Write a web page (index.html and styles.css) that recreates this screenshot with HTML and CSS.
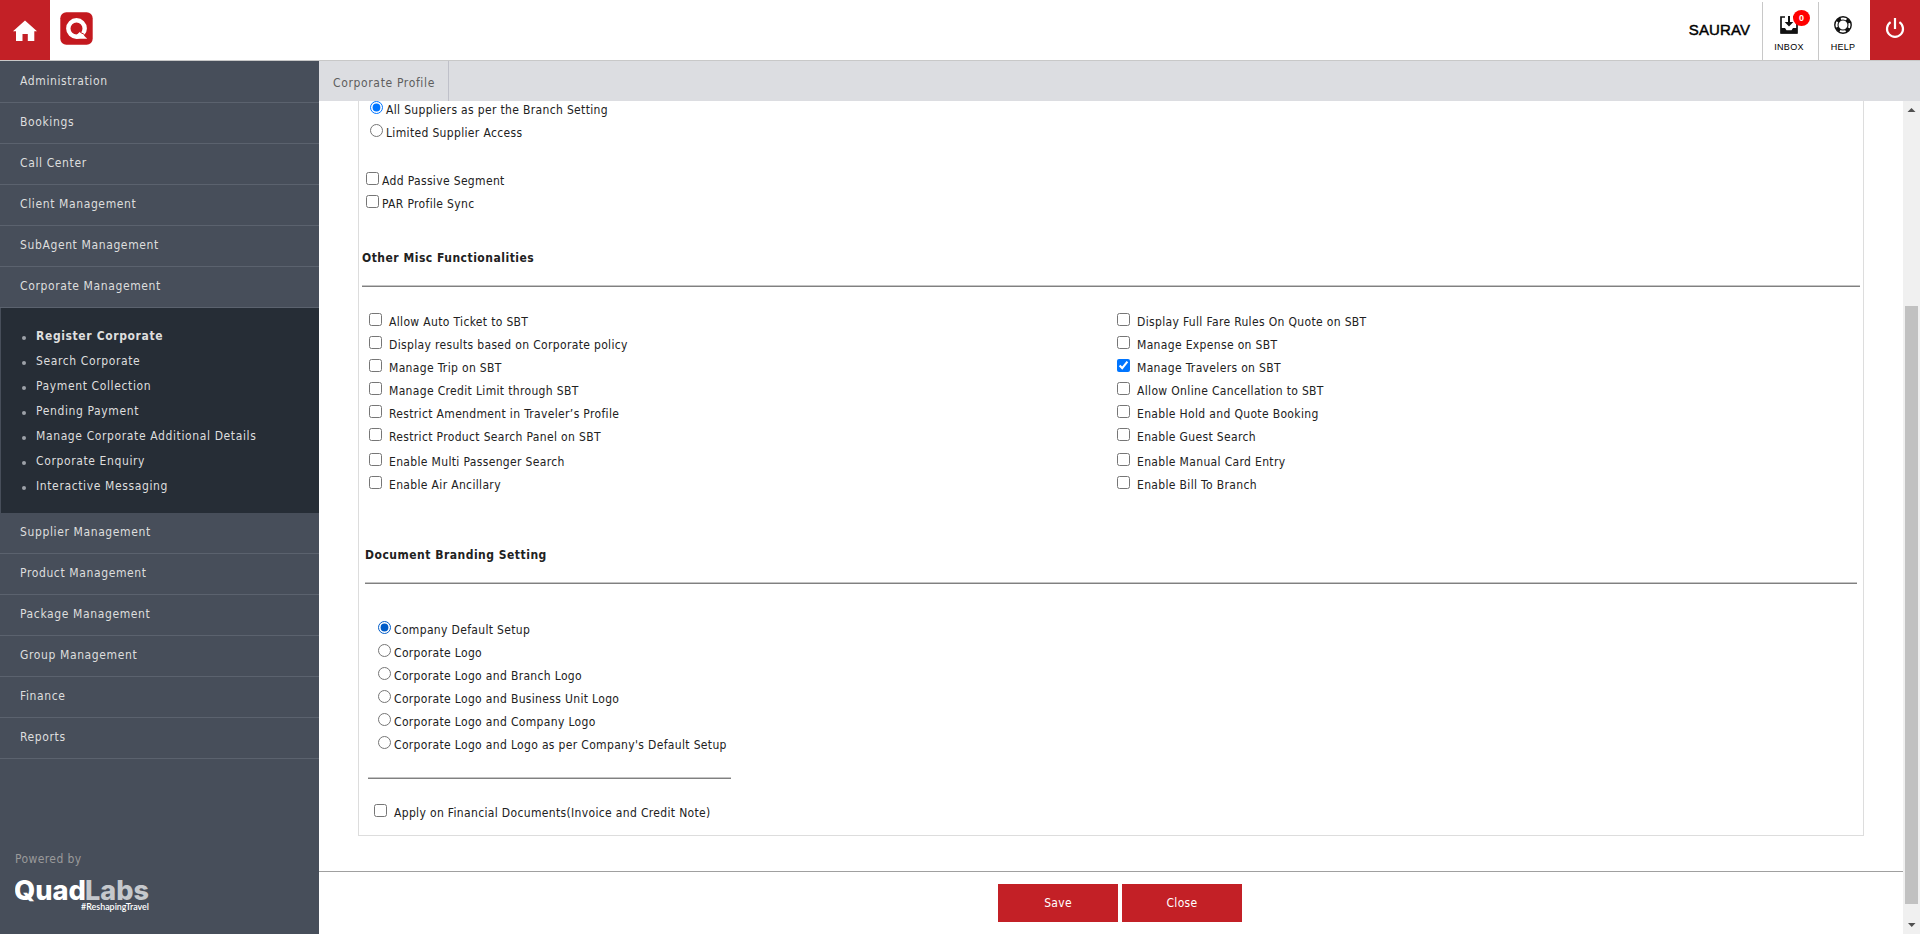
FILE: index.html
```html
<!DOCTYPE html>
<html lang="en">
<head>
<meta charset="utf-8">
<title>Corporate Profile</title>
<link rel="stylesheet" href="styles.css">
</head>
<body>
<header class="top">
  <a class="home"><svg width="26" height="22" viewBox="0 0 26 22"><path d="M13 0.5 L25 11.3 H22.3 V21 H15.8 V14 H10.5 V21 H4 V11.3 H1 Z" fill="#fff"/></svg></a>
  <svg class="brand" width="33" height="33" viewBox="0 0 33 33"><rect x=".3" y=".3" width="32.4" height="32.4" rx="6" fill="#c4191f"/><circle cx="16.5" cy="16.5" r="8.2" fill="none" stroke="#fff" stroke-width="4.4"/><path d="M17 22.5 L20 19.8 L27.2 26.7 H16.5 Z" fill="#fff"/><path d="M20.3 20.3 L24.6 22.6" stroke="#c4191f" stroke-width="1"/></svg>
  <div class="user">SAURAV</div>
  <div class="tool inbox">
    <svg width="18" height="18" viewBox="0 0 18 18"><path d="M5 1H1V17H17V1H13" fill="none" stroke="#111" stroke-width="1.7"/><path d="M1 12H5L6.5 14.2H11.5L13 12H17V17.6H1Z" fill="#111"/><path d="M8 0H10V6H13.3L9 10.5 4.7 6H8Z" fill="#111"/></svg>
    <span>INBOX</span><b class="badge">0</b>
  </div>
  <div class="tool help">
    <svg width="18" height="18" viewBox="0 0 18 18" fill="none"><circle cx="9" cy="9" r="8.2" stroke="#111" stroke-width="1.4"/><circle cx="9" cy="9" r="5" stroke="#111" stroke-width="1.1"/><circle cx="9" cy="9" r="6.5" stroke="#111" stroke-width="3" stroke-dasharray="4.4 5.81" stroke-dashoffset="-2.9"/></svg>
    <span>HELP</span>
  </div>
  <a class="power"><svg width="20" height="21" viewBox="0 0 20 21" fill="none" stroke="#fff" stroke-width="2.2"><path d="M5.6 4.2A8 8 0 1 0 14.4 4.2M10 0V11"/></svg></a>
</header>
<div class="body">
  <nav class="side">
    <a class="item">Administration</a>
    <a class="item">Bookings</a>
    <a class="item">Call Center</a>
    <a class="item">Client Management</a>
    <a class="item">SubAgent Management</a>
    <a class="item">Corporate Management</a>
    <ul class="sub">
      <li class="active">Register Corporate</li>
      <li>Search Corporate</li>
      <li>Payment Collection</li>
      <li>Pending Payment</li>
      <li>Manage Corporate Additional Details</li>
      <li>Corporate Enquiry</li>
      <li>Interactive Messaging</li>
    </ul>
    <a class="item">Supplier Management</a>
    <a class="item">Product Management</a>
    <a class="item">Package Management</a>
    <a class="item">Group Management</a>
    <a class="item">Finance</a>
    <a class="item">Reports</a>
    <div class="powered">
      <span>Powered by</span>
      <svg width="138" height="46" viewBox="0 0 138 46"><text x="-1" y="32" class="ql" textLength="72" lengthAdjust="spacingAndGlyphs" fill="#fff">Quad</text><text x="70" y="32" class="ql" textLength="64" lengthAdjust="spacingAndGlyphs" fill="#c5c8cc">Labs</text><text x="66" y="42" class="tag" textLength="68" lengthAdjust="spacingAndGlyphs" fill="#fff">#ReshapingTravel</text></svg>
    </div>
  </nav>
  <main class="main">
    <div class="tabs"><div class="tab">Corporate Profile</div></div>
    <div class="work">
      <div class="page">
        <div class="panel">
          <div class="list suppliers">
            <label><input type="radio" name="sup" checked>All Suppliers as per the Branch Setting</label>
            <label><input type="radio" name="sup">Limited Supplier Access</label>
          </div>
          <div class="list extras">
            <label><input type="checkbox">Add Passive Segment</label>
            <label><input type="checkbox">PAR Profile Sync</label>
          </div>
          <h2 class="misc-title">Other Misc Functionalities</h2>
          <div class="rule misc-rule"></div>
          <div class="columns">
            <div class="list wide">
              <label><input type="checkbox">Allow Auto Ticket to SBT</label>
              <label><input type="checkbox">Display results based on Corporate policy</label>
              <label><input type="checkbox">Manage Trip on SBT</label>
              <label><input type="checkbox">Manage Credit Limit through SBT</label>
              <label><input type="checkbox">Restrict Amendment in Traveler’s Profile</label>
              <label class="tall"><input type="checkbox">Restrict Product Search Panel on SBT</label>
              <label><input type="checkbox">Enable Multi Passenger Search</label>
              <label><input type="checkbox">Enable Air Ancillary</label>
            </div>
            <div class="list wide">
              <label><input type="checkbox">Display Full Fare Rules On Quote on SBT</label>
              <label><input type="checkbox">Manage Expense on SBT</label>
              <label><input type="checkbox" checked>Manage Travelers on SBT</label>
              <label><input type="checkbox">Allow Online Cancellation to SBT</label>
              <label><input type="checkbox">Enable Hold and Quote Booking</label>
              <label class="tall"><input type="checkbox">Enable Guest Search</label>
              <label><input type="checkbox">Enable Manual Card Entry</label>
              <label><input type="checkbox">Enable Bill To Branch</label>
            </div>
          </div>
          <h2 class="doc-title">Document Branding Setting</h2>
          <div class="rule doc-rule"></div>
          <div class="list branding">
            <label><input type="radio" name="doc" class="dark" checked>Company Default Setup</label>
            <label><input type="radio" name="doc">Corporate Logo</label>
            <label><input type="radio" name="doc">Corporate Logo and Branch Logo</label>
            <label><input type="radio" name="doc">Corporate Logo and Business Unit Logo</label>
            <label><input type="radio" name="doc">Corporate Logo and Company Logo</label>
            <label><input type="radio" name="doc">Corporate Logo and Logo as per Company's Default Setup</label>
          </div>
          <div class="rule short-rule"></div>
          <div class="list wide apply"><label><input type="checkbox">Apply on Financial Documents(Invoice and Credit Note)</label></div>
        </div>
        <footer class="actions"><button>Save</button><button>Close</button></footer>
      </div>
      <div class="scroll">
        <svg width="17" height="17" viewBox="0 0 17 17"><path d="M8.5 7L12.5 11H4.5Z" fill="#505050"/></svg>
        <div class="thumb"></div>
        <svg width="17" height="17" viewBox="0 0 17 17"><path d="M5 6H12.5L8.75 10Z" fill="#505050"/></svg>
      </div>
    </div>
  </main>
</div>
</body>
</html>
```
FILE: styles.css
```css
* { box-sizing: border-box; }
body { margin: 0; height: 934px; overflow: hidden; display: flex; flex-direction: column; background: #fff; color: #212121; font: 12px/17px "DejaVu Sans Condensed", "DejaVu Sans", sans-serif; font-stretch: condensed; }
svg { display: block; flex: none; }
.top { height: 61px; flex: none; display: flex; border-bottom: 1px solid #c8c8c8; font-family: "Liberation Sans", Arial, sans-serif; color: #000; }
.home { width: 50px; height: 60px; background: #c32026; padding: 20px 0 0 12px; }
.brand { margin: 12px 0 0 10px; }
.user { margin-left: auto; padding: 20px 12px 0 0; font-size: 15px; line-height: 20px; letter-spacing: .1px; -webkit-text-stroke: .45px #000; }
.tool { position: relative; height: 58px; margin-top: 2px; border-left: 1px solid #c8c8c8; display: flex; flex-direction: column; align-items: center; padding-top: 14px; font-size: 9px; line-height: 12px; gap: 7px; letter-spacing: .3px; }
.inbox { width: 56px; padding-right: 3px; }
.help { width: 52px; padding-right: 3px; }
.badge { position: absolute; left: 30px; top: 8px; width: 17px; height: 16px; border-radius: 50%; background: #f00; color: #fff; font-size: 9px; line-height: 16px; text-align: center; letter-spacing: 0; }
.power { width: 50px; height: 60px; background: #c32026; padding: 18px 0 0 15px; }
.body { flex: 1; display: flex; min-height: 0; }
.side { width: 319px; background: #474e5a; color: #dedede; display: flex; flex-direction: column; letter-spacing: .62px; }
.item { height: 41px; padding: 11px 20px 0; border-bottom: 1px solid #5b626e; }
.item:first-child { height: 42px; padding-top: 12px; }
.sub { list-style: none; margin: 0 0 0 1px; padding: 16px 0 14px; height: 205px; background: #262d36; }
.sub li { height: 25px; line-height: 25px; padding-left: 35px; display: flex; align-items: center; }
.sub li::before { content: ""; width: 4px; height: 4px; margin: 3px 10px 0 -14px; border-radius: 50%; background: #9da1a8; }
.sub .active { font-weight: bold; }
.powered { margin: auto 0 16px 15px; color: #9a9a9a; letter-spacing: .4px; height: 67px; }
.powered svg { letter-spacing: 0; }
.ql { font: 800 27px Inter, sans-serif; }
.tag { font: 600 9px Lato, sans-serif; }
.main { flex: 1; display: flex; flex-direction: column; min-width: 0; }
.tabs { height: 40px; background: #dcdde1; }
.tab { width: 130px; height: 40px; padding: 14px 0 0 14px; border-right: 1px solid #bfc0c9; color: #5e5e5e; letter-spacing: .65px; white-space: nowrap; }
.work { flex: 1; display: flex; }
.page { flex: 1; }
.panel { height: 735px; margin: 0 39px 0 39px; border: 1px solid #ddd; border-top: 0; letter-spacing: .34px; }
.list label { display: flex; gap: 3px; height: 23px; line-height: 19px; align-items: flex-start; white-space: nowrap; }
.list input { margin: 0; width: 13px; height: 13px; flex: none; }
.list .dark { accent-color: #005cc8; }
.wide label { gap: 7px; }
.list .tall { height: 25px; }
.suppliers { padding-left: 11px; }
.extras { padding: 25px 0 0 7px; }
h2 { margin: 0; font-size: 12px; line-height: 17px; font-weight: bold; letter-spacing: .5px; }
.misc-title { padding: 32px 0 0 3px; }
.rule { height: 2px; background: #808080; border-top: 1px solid #c4c4c4; }
.misc-rule { margin: 18px 3px 0 3px; }
.columns { display: grid; grid-template-columns: 748px 1fr; padding: 26px 0 0 10px; }
.doc-title { padding: 48px 0 0 6px; }
.doc-rule { margin: 18px 6px 0; }
.branding { padding: 37px 0 0 19px; }
.short-rule { width: 363px; margin: 18px 0 0 9px; }
.apply { padding: 25px 0 0 15px; }
.actions { margin-top: 35px; border-top: 1px solid #a0a0a0; display: flex; justify-content: center; gap: 4px; padding: 12px 0 0 18px; }
.actions button { width: 120px; height: 38px; padding: 1px 0 0; border: 0; background: #c32026; color: #fff; font: inherit; letter-spacing: .3px; }
.scroll { width: 17px; background: #f0f0f0; display: flex; flex-direction: column; }
.thumb { height: 598px; margin: 188px 2px auto; background: #c1c1c1; }
```
